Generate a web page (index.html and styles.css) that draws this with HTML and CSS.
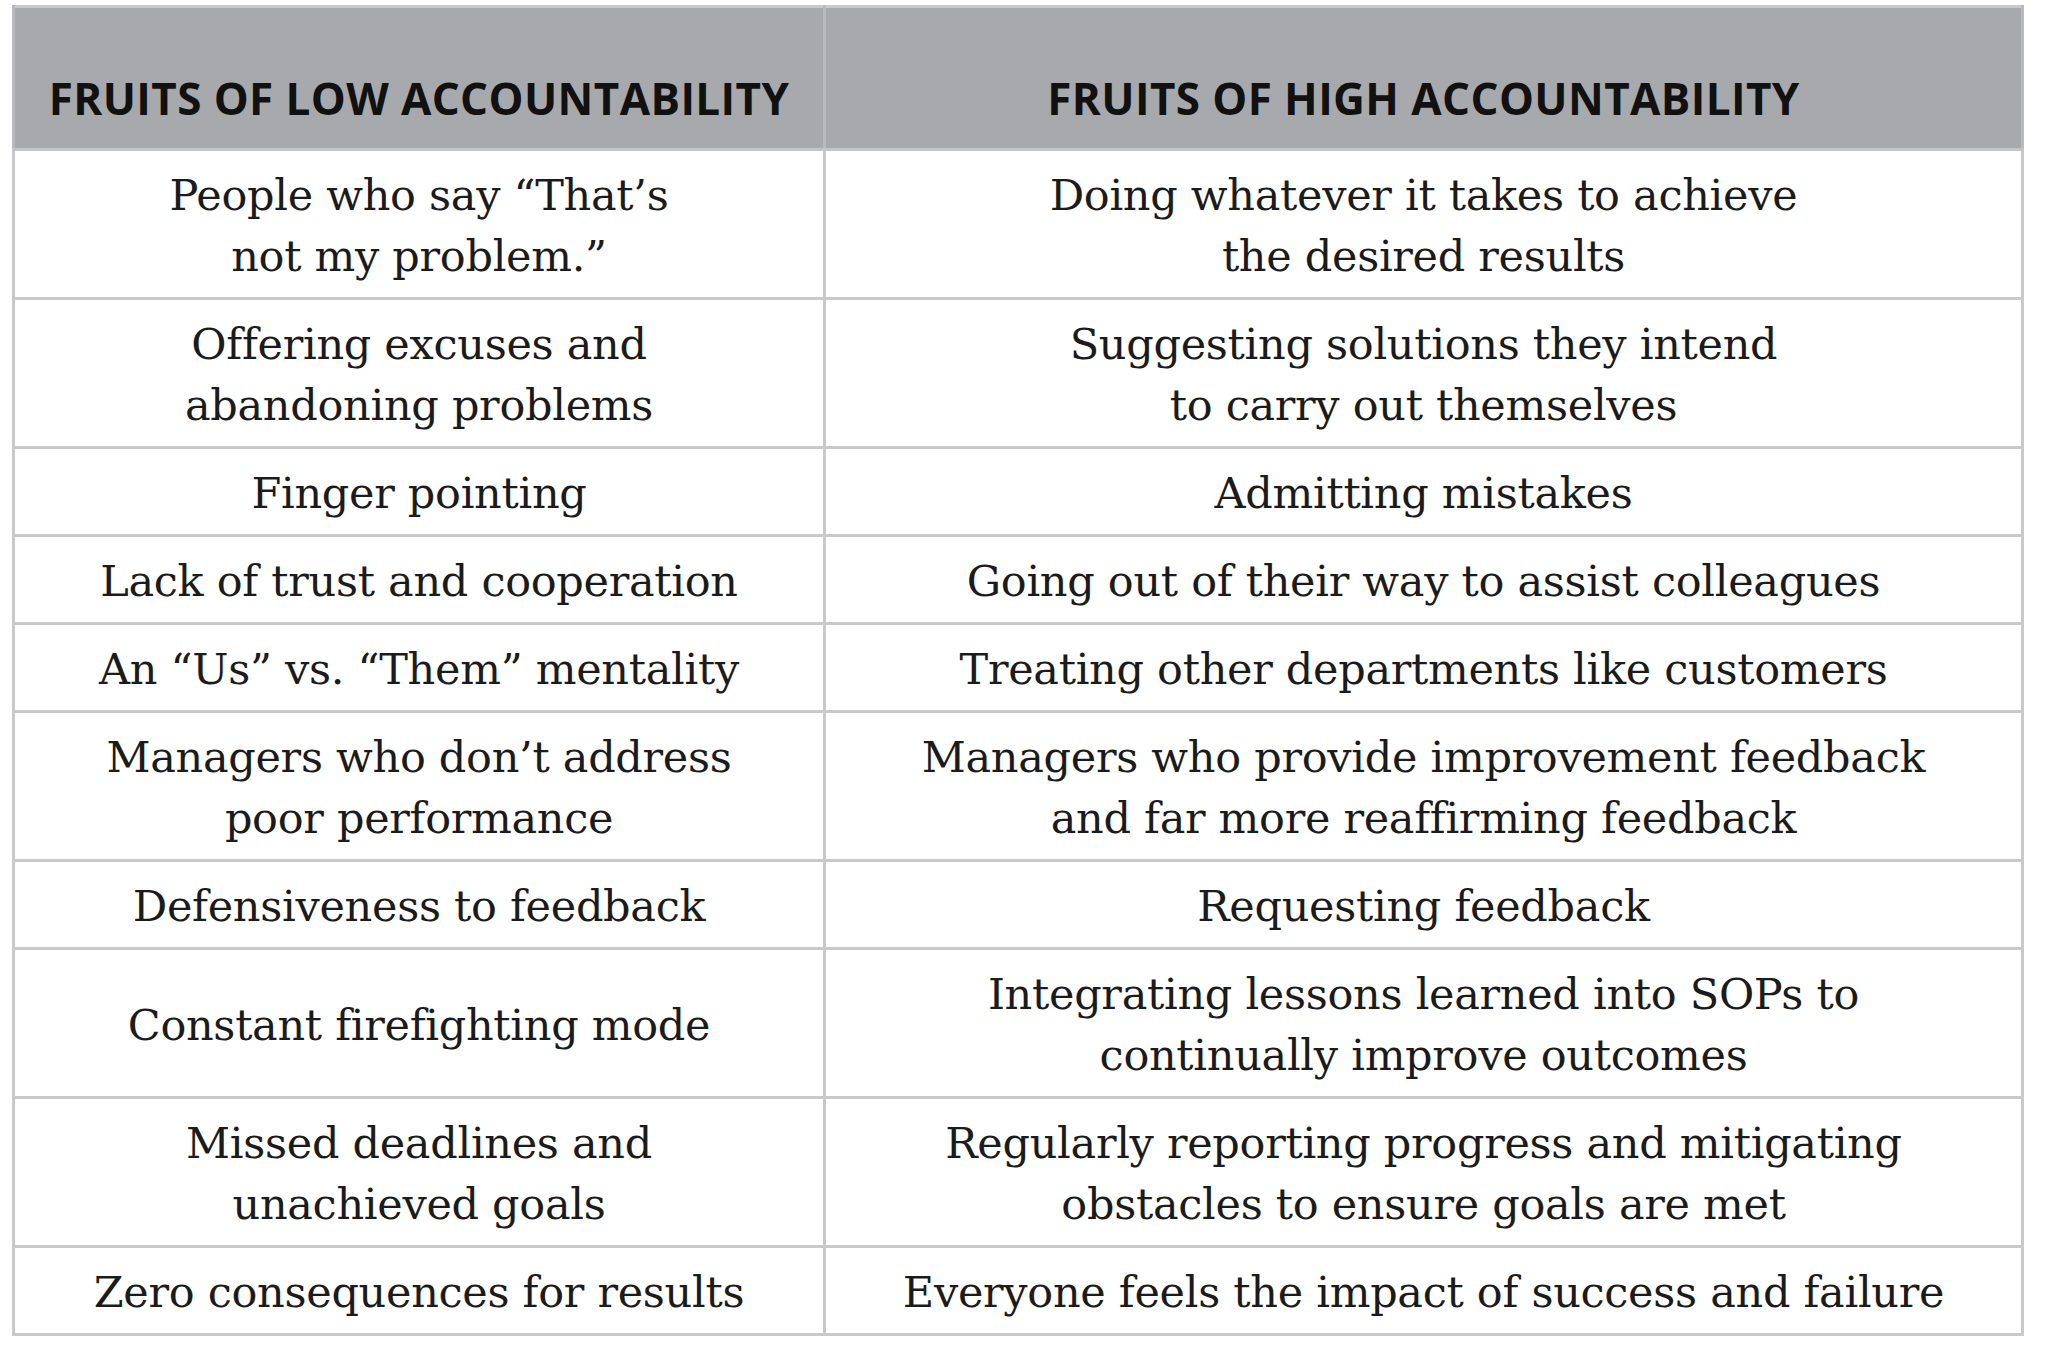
FILE: index.html
```html
<!DOCTYPE html>
<html lang="en">
<head>
<meta charset="utf-8">
<title>Fruits of Accountability</title>
<link rel="stylesheet" href="styles.css">
</head>
<body>
<table class="fruits">
  <colgroup><col class="col-low"><col class="col-high"></colgroup>
  <thead>
    <tr>
      <th>FRUITS OF LOW ACCOUNTABILITY</th>
      <th>FRUITS OF HIGH ACCOUNTABILITY</th>
    </tr>
  </thead>
  <tbody>
    <tr><td>People who say “That’s<br>not my problem.”</td><td>Doing whatever it takes to achieve<br>the desired results</td></tr>
    <tr><td>Offering excuses and<br>abandoning problems</td><td>Suggesting solutions they intend<br>to carry out themselves</td></tr>
    <tr><td>Finger pointing</td><td>Admitting mistakes</td></tr>
    <tr><td>Lack of trust and cooperation</td><td>Going out of their way to assist colleagues</td></tr>
    <tr><td>An “Us” vs. “Them” mentality</td><td>Treating other departments like customers</td></tr>
    <tr><td>Managers who don’t address<br>poor performance</td><td>Managers who provide improvement feedback<br>and far more reaffirming feedback</td></tr>
    <tr><td>Defensiveness to feedback</td><td>Requesting feedback</td></tr>
    <tr><td>Constant firefighting mode</td><td>Integrating lessons learned into SOPs to<br>continually improve outcomes</td></tr>
    <tr><td>Missed deadlines and<br>unachieved goals</td><td>Regularly reporting progress and mitigating<br>obstacles to ensure goals are met</td></tr>
    <tr><td>Zero consequences for results</td><td>Everyone feels the impact of success and failure</td></tr>
  </tbody>
</table>
</body>
</html>
```

FILE: styles.css
```css
html, body {
  margin: 0;
  padding: 0;
  background: #ffffff;
}

body {
  padding: 5px 0 0 12px;
}

.fruits {
  border-collapse: collapse;
  width: 2012px;
  table-layout: fixed;
  border: 3px solid #c9c9cb;
}

.col-low {
  width: 811px;
}

.fruits th {
  background: #a8a9ad;
  color: #111111;
  font-family: "Open Sans", "Liberation Sans", sans-serif;
  font-weight: 700;
  font-size: 44px;
  line-height: 57px;
  letter-spacing: 0.4px;
  text-align: center;
  vertical-align: bottom;
  padding: 62px 10px 21px;
  border-left: 3px solid #b9babd;
  border-right: 3px solid #b9babd;
  border-bottom: 3px solid #c3c4c6;
}

.fruits td {
  font-family: "DejaVu Serif", "Liberation Serif", serif;
  font-size: 43px;
  line-height: 61px;
  letter-spacing: -0.3px;
  color: #1b1b1b;
  text-align: center;
  vertical-align: middle;
  padding: 14px 20px 10px;
  border: 3px solid #c9c9cb;
}
```
